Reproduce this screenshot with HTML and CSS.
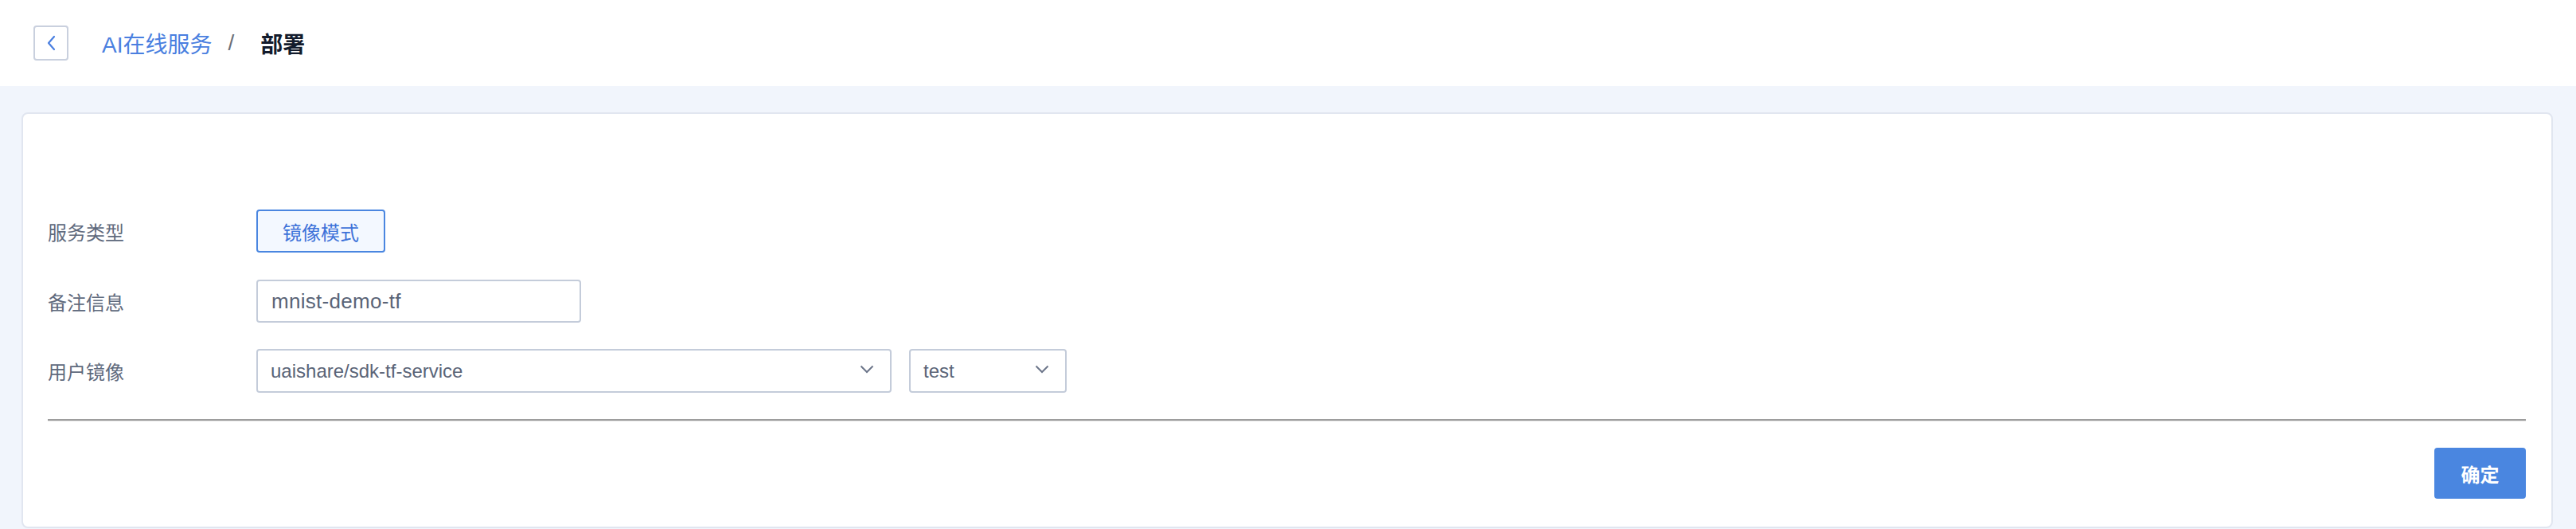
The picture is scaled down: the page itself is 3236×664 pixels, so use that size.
FILE: index.html
```html
<!DOCTYPE html>
<html lang="zh-CN">
<head>
<meta charset="utf-8">
<title>部署</title>
<link rel="stylesheet" href="styles.css">
</head>
<body>
<header class="topbar">
  <button class="back-btn" type="button" aria-label="返回">
    <svg width="12" height="20" viewBox="0 0 12 20"><path d="M10 2 L3 10 L10 18" fill="none" stroke="#4a7fe0" stroke-width="2.2" stroke-linecap="round" stroke-linejoin="round"/></svg>
  </button>
  <nav class="crumbs">
    <a class="crumb-link" href="#">AI在线服务</a>
    <span class="crumb-sep">/</span>
    <span class="crumb-current">部署</span>
  </nav>
</header>
<main class="page">
  <section class="card">
    <div class="form">
      <div class="row">
        <div class="label">服务类型</div>
        <button class="mode-btn" type="button">镜像模式</button>
      </div>
      <div class="row">
        <div class="label">备注信息</div>
        <div class="input">mnist-demo-tf</div>
      </div>
      <div class="row row-last">
        <div class="label">用户镜像</div>
        <div class="select select-wide"><span>uaishare/sdk-tf-service</span>
          <svg width="18" height="11" viewBox="0 0 18 11"><path d="M1.5 1.5 L9 9 L16.5 1.5" fill="none" stroke="#6b7589" stroke-width="2"/></svg>
        </div>
        <div class="select select-narrow"><span>test</span>
          <svg width="18" height="11" viewBox="0 0 18 11"><path d="M1.5 1.5 L9 9 L16.5 1.5" fill="none" stroke="#6b7589" stroke-width="2"/></svg>
        </div>
      </div>
    </div>
    <hr class="divider">
    <div class="actions">
      <button class="primary" type="button">确定</button>
    </div>
  </section>
</main>
</body>
</html>
```

FILE: styles.css
```css
html, body {
  margin: 0;
  padding: 0;
}
body {
  background: #f1f5fc;
  font-family: "Liberation Sans", "Noto Sans CJK SC", sans-serif;
  width: 3236px;
  height: 664px;
  overflow: hidden;
}
.topbar {
  height: 108px;
  background: #ffffff;
  display: flex;
  align-items: center;
  padding-left: 42px;
  box-sizing: border-box;
}
.back-btn {
  width: 44px;
  height: 44px;
  box-sizing: border-box;
  border: 2px solid #c9d0de;
  border-radius: 4px;
  background: #fff;
  display: flex;
  align-items: center;
  justify-content: center;
  padding: 0;
  margin-top: 0;
}
.crumbs {
  display: flex;
  align-items: center;
  margin-left: 42px;
  font-size: 28px;
}
.crumb-link {
  color: #4a7fe0;
  text-decoration: none;
}
.crumb-sep {
  color: #6b6f78;
  margin: 0 33px 0 20px;
}
.crumb-current {
  color: #131b2c;
  font-weight: bold;
}
.page {
  padding: 33px 29px 0 27px;
}
.card {
  background: #ffffff;
  border: 2px solid #e1e6f0;
  border-radius: 8px;
  padding: 120px 32px 35px 31px;
}
.form {
  display: flex;
  flex-direction: column;
  gap: 34px;
}
.row {
  display: flex;
  align-items: center;
  height: 54px;
}
.row-last {
  height: 55px;
  margin-top: -1px;
}
.label {
  width: 262px;
  font-size: 24px;
  color: #5f6a7d;
}
.mode-btn {
  width: 162px;
  height: 54px;
  box-sizing: border-box;
  border: 2px solid #4a86e0;
  border-radius: 4px;
  background: #f3f8ff;
  color: #3d72d9;
  font-family: "Liberation Sans", "Noto Sans CJK SC", sans-serif;
  font-size: 24px;
  padding: 0;
}
.input {
  width: 408px;
  height: 54px;
  box-sizing: border-box;
  border: 2px solid #c4ccda;
  border-radius: 4px;
  padding-left: 17px;
  display: flex;
  align-items: center;
  font-size: 26px;
  letter-spacing: 0.3px;
  color: #5a6477;
}
.select {
  height: 55px;
  box-sizing: border-box;
  border: 2px solid #c4ccda;
  border-radius: 4px;
  padding: 0 20px 0 16px;
  display: flex;
  align-items: center;
  justify-content: space-between;
  font-size: 24px;
  color: #5a6477;
}
.select svg {
  margin-top: -4px;
}
.select-wide {
  width: 798px;
}
.select-narrow {
  width: 198px;
  margin-left: 22px;
}
.divider {
  margin: 33px 0 0 0;
  height: 0;
  border: 0;
  border-top: 2px solid #9d9d9d;
  border-bottom: 1px solid #e8e8e8;
}
.actions {
  display: flex;
  justify-content: flex-end;
  margin-top: 33px;
}
.primary {
  width: 115px;
  height: 64px;
  border: 0;
  border-radius: 4px;
  background: #4a86e0;
  color: #ffffff;
  font-family: "Liberation Sans", "Noto Sans CJK SC", sans-serif;
  font-size: 24px;
  font-weight: bold;
  padding: 0;
}
```
